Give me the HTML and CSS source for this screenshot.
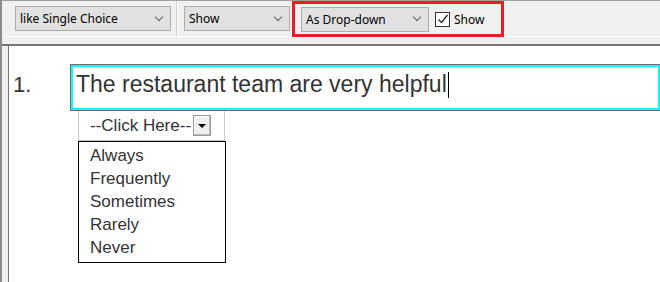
FILE: index.html
```html
<!DOCTYPE html>
<html lang="en">
<head>
    <meta charset="UTF-8">
    <title>Question Designer</title>
    <link rel="stylesheet" href="styles.css">
</head>
<body>
    <div class="window">
        <!-- Toolbar -->
        <div class="toolbar">
            <div class="combo combo-type">
                <span>like Single Choice</span>
                <span class="chevron"></span>
            </div>
            <div class="separator"></div>
            <div class="combo combo-show">
                <span>Show</span>
                <span class="chevron"></span>
            </div>
            <div class="highlight">
                <div class="combo combo-style">
                    <span>As Drop-down</span>
                    <span class="chevron"></span>
                </div>
                <label class="check">
                    <span class="check-box">
                        <svg width="12" height="12" viewBox="0 0 12 12"><path d="M1.5 6.5 L4.5 9.5 L10.5 2" fill="none" stroke="#222" stroke-width="1.3"/></svg>
                    </span>
                    Show
                </label>
            </div>
        </div>
        <div class="strip"></div>

        <!-- Canvas -->
        <div class="main">
            <div class="gutter"></div>
            <div class="canvas">
                <div class="question">
                    <div class="number">1.</div>
                    <div class="answer">
                        <div class="text-field">The restaurant team are very helpful<span class="caret"></span></div>
                        <div class="dropdown">
                            <span>--Click Here--</span>
                            <span class="drop-btn"></span>
                        </div>
                        <ul class="options">
                            <li>Always</li>
                            <li>Frequently</li>
                            <li>Sometimes</li>
                            <li>Rarely</li>
                            <li>Never</li>
                        </ul>
                    </div>
                </div>
            </div>
        </div>
    </div>
</body>
</html>
```

FILE: styles.css
```css
html, body {
    margin: 0;
    height: 100%;
}

body {
    background-color: #f0f0f0;
    font-family: "Noto Sans", Arial, sans-serif;
    overflow: hidden;
}

.window {
    display: flex;
    flex-direction: column;
    height: 282px;
    border-left: 2px solid #8c8c8c;
    box-sizing: border-box;
}

/* Toolbar */
.toolbar {
    display: flex;
    align-items: center;
    height: 37px;
    border-top: 1px solid #a0a0a0;
    border-bottom: 1px solid #ffffff;
    padding-left: 13px;
    box-sizing: border-box;
}

.combo {
    display: flex;
    align-items: center;
    justify-content: space-between;
    height: 25px;
    box-sizing: border-box;
    border: 1px solid #adadad;
    background-color: #e1e1e1;
    padding: 0 8px 0 4px;
    font-size: 12px;
    color: #000;
}

.combo-type {
    width: 156px;
}

.combo-show {
    width: 106px;
}

.combo-style {
    width: 128px;
}

.chevron {
    width: 5px;
    height: 5px;
    border-right: 1px solid #606060;
    border-bottom: 1px solid #606060;
    transform: rotate(45deg);
    margin-top: -4px;
}

.separator {
    width: 1px;
    height: 35px;
    background-color: #d0d0d0;
    border-right: 1px solid #ffffff;
    margin: 0 6px 0 5px;
}

.highlight {
    display: flex;
    align-items: center;
    height: 36px;
    box-sizing: border-box;
    border: 3px solid #ed1c24;
    margin-left: 2px;
    margin-top: 1px;
    padding: 0 17px 0 6px;
}

.check {
    display: flex;
    align-items: center;
    gap: 4px;
    margin-left: 6px;
    font-size: 12px;
}

.check-box {
    display: flex;
    align-items: center;
    justify-content: center;
    width: 13px;
    height: 13px;
    border: 1px solid #333;
    background-color: #fff;
}

.strip {
    height: 7px;
    border-bottom: 2px solid #777;
}

/* Canvas */
.main {
    display: flex;
    flex: 1;
}

.gutter {
    width: 6px;
    border-right: 1px solid #777;
}

.canvas {
    flex: 1;
    background-color: #fff;
    padding-top: 18px;
    font-family: "Liberation Sans", Arial, sans-serif;
    color: #333;
}

.question {
    display: flex;
}

.number {
    width: 61px;
    padding-left: 4px;
    padding-top: 8px;
    font-size: 22px;
    box-sizing: border-box;
}

.answer {
    flex: 1;
}

.text-field {
    height: 47px;
    box-sizing: border-box;
    border: 1px solid #6d6d6d;
    border-right: none;
    box-shadow: inset 0 0 0 2px #00ffff;
    padding: 4px 0 0 5px;
    font-size: 23px;
    line-height: 30px;
    color: #333;
}

.caret {
    display: inline-block;
    width: 1px;
    height: 26px;
    background-color: #000;
    vertical-align: -6px;
    margin-left: 1px;
}

.dropdown {
    display: flex;
    align-items: center;
    width: 147px;
    height: 30px;
    margin-left: 8px;
    box-sizing: border-box;
    border: 1px solid #c8c8c8;
    border-top: none;
    padding-left: 11px;
    font-size: 17px;
    color: #333;
}

.drop-btn {
    position: relative;
    width: 18px;
    height: 21px;
    box-sizing: border-box;
    margin-left: 2px;
    border: 1px solid #999;
    background-color: #f0f0f0;
    box-shadow: inset -1px -1px 0 #bbb, inset 1px 1px 0 #fff;
}

.drop-btn::after {
    content: "";
    position: absolute;
    left: 4px;
    top: 8px;
    border-left: 4px solid transparent;
    border-right: 4px solid transparent;
    border-top: 4px solid #000;
}

.options {
    list-style: none;
    margin: 0 0 0 8px;
    padding: 2px 0 3px 11px;
    width: 148px;
    box-sizing: border-box;
    border: 1px solid #000;
    font-size: 17px;
    line-height: 23px;
    color: #333;
}
```
